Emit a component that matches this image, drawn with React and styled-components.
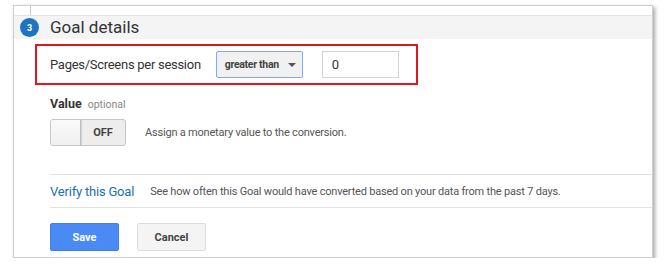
import React from "react";
import styled, { createGlobalStyle } from "styled-components";

const Global = createGlobalStyle`
  html, body { margin: 0; padding: 0; background: #fff; }
  body { font-family: Roboto, "Liberation Sans", Arial, sans-serif; color: #333; }
`;

const Card = styled.div`
  margin: 5px 0 0 13px;
  width: 640px;
  height: 253px;
  border: 1px solid #cfcfcf;
  box-shadow: 2px 2px 4px rgba(0, 0, 0, 0.35);
  background: #fff;
  box-sizing: border-box;
`;

const Connector = styled.div`
  width: 1px;
  height: 9px;
  margin-left: 16px;
  background: #c8c8c8;
`;

const Header = styled.div`
  display: flex;
  align-items: center;
  height: 23px;
  background: #f4f4f4;
  border-top: 1px solid #e4e4e4;
`;

const StepBadge = styled.div`
  width: 19px;
  height: 19px;
  margin-left: 6px;
  border-radius: 50%;
  background: #1f74c1;
  color: #fff;
  font-size: 9px;
  font-weight: 700;
  display: flex;
  align-items: center;
  justify-content: center;
`;

const Title = styled.div`
  margin-left: 11px;
  font-size: 17px;
  color: #333;
  line-height: 23px;
`;

const Body = styled.div`
  padding: 5px 0 0 21px;
`;

const Highlight = styled.div`
  width: 383px;
  height: 41px;
  box-sizing: border-box;
  border: 2px solid #e3161e;
  display: flex;
  align-items: center;
  padding-left: 13px;
`;

const FieldLabel = styled.span`
  font-size: 13px;
  color: #333;
  letter-spacing: -0.28px;
`;

const Dropdown = styled.div`
  margin-left: 15px;
  width: 87px;
  height: 27px;
  box-sizing: border-box;
  border: 1px solid #7eaaf5;
  border-radius: 2px;
  background: #f1f1f1;
  display: flex;
  align-items: center;
  padding-left: 8px;
  gap: 9px;
  font-size: 10.5px;
  letter-spacing: -0.3px;
  font-weight: 700;
  color: #444;
`;

const Caret = styled.span`
  width: 0;
  height: 0;
  border-left: 4px solid transparent;
  border-right: 4px solid transparent;
  border-top: 4px solid #555;
`;

const TextInput = styled.div`
  margin-left: 19px;
  margin-top: -1px;
  width: 77px;
  height: 27px;
  box-sizing: border-box;
  border: 1px solid #d4d4d4;
  display: flex;
  align-items: center;
  padding-left: 9px;
  font-size: 13px;
  color: #333;
`;

const Section = styled.div`
  padding-left: 15px;
`;

const ValueLabel = styled.div`
  margin-top: 12px;
  font-size: 12.5px;
  font-weight: 700;
  color: #333;
  line-height: 14px;
`;

const Optional = styled.span`
  margin-left: 6px;
  font-size: 10.5px;
  font-weight: 400;
  color: #888;
`;

const ToggleRow = styled.div`
  display: flex;
  align-items: center;
  margin-top: 7px;
`;

const Toggle = styled.div`
  display: flex;
  width: 76px;
  height: 27px;
  box-sizing: border-box;
  border: 1px solid #c6c6c6;
  border-radius: 3px;
  background: #ededed;
  overflow: hidden;
`;

const Knob = styled.div`
  width: 29px;
  background: linear-gradient(#fafafa, #f0f0f0);
  border-right: 1px solid #bdbdbd;
  box-shadow: 1px 0 1px rgba(0, 0, 0, 0.1);
`;

const ToggleText = styled.div`
  flex: 1;
  display: flex;
  align-items: center;
  justify-content: center;
  font-size: 11px;
  font-weight: 700;
  color: #444;
`;

const Hint = styled.span`
  margin-left: ${(p) => p.$gap || 0}px;
  font-size: 11px;
  letter-spacing: -0.2px;
  color: #555;
`;

const Divider = styled.div`
  margin-top: ${(p) => p.$top}px;
  height: 1px;
  background: #e2e2e2;
  margin-left: 36px;
`;

const VerifyRow = styled.div`
  display: flex;
  align-items: center;
  height: 32px;
  padding-left: 36px;
`;

const VerifyLink = styled.a`
  font-size: 13px;
  letter-spacing: -0.2px;
  color: #1a6fb8;
  text-decoration: none;
  cursor: pointer;
`;

const Buttons = styled.div`
  display: flex;
  gap: 18px;
  padding: 15px 0 0 36px;
`;

const Button = styled.button`
  width: 69px;
  height: 28px;
  box-sizing: border-box;
  border-radius: 2px;
  font-family: inherit;
  font-size: 11px;
  font-weight: 700;
  border: 1px solid ${(p) => (p.$primary ? "#3f7fe6" : "#dcdcdc")};
  background: ${(p) => (p.$primary ? "#4a8af4" : "#f4f4f4")};
  color: ${(p) => (p.$primary ? "#fff" : "#444")};
  cursor: pointer;
`;

export default function App() {
  return (
    <>
      <Global />
      <Card>
        <Connector />
        <Header>
          <StepBadge>3</StepBadge>
          <Title>Goal details</Title>
        </Header>
        <Body>
          <Highlight>
            <FieldLabel>Pages/Screens per session</FieldLabel>
            <Dropdown>
              greater than <Caret />
            </Dropdown>
            <TextInput>0</TextInput>
          </Highlight>
          <Section>
            <ValueLabel>
              Value<Optional>optional</Optional>
            </ValueLabel>
            <ToggleRow>
              <Toggle>
                <Knob />
                <ToggleText>OFF</ToggleText>
              </Toggle>
              <Hint $gap={19}>Assign a monetary value to the conversion.</Hint>
            </ToggleRow>
          </Section>
        </Body>
        <Divider $top={28} />
        <VerifyRow>
          <VerifyLink>Verify this Goal</VerifyLink>
          <Hint $gap={16}>
            See how often this Goal would have converted based on your data from the past 7 days.
          </Hint>
        </VerifyRow>
        <Divider $top={0} />
        <Buttons>
          <Button $primary>Save</Button>
          <Button>Cancel</Button>
        </Buttons>
      </Card>
    </>
  );
}
